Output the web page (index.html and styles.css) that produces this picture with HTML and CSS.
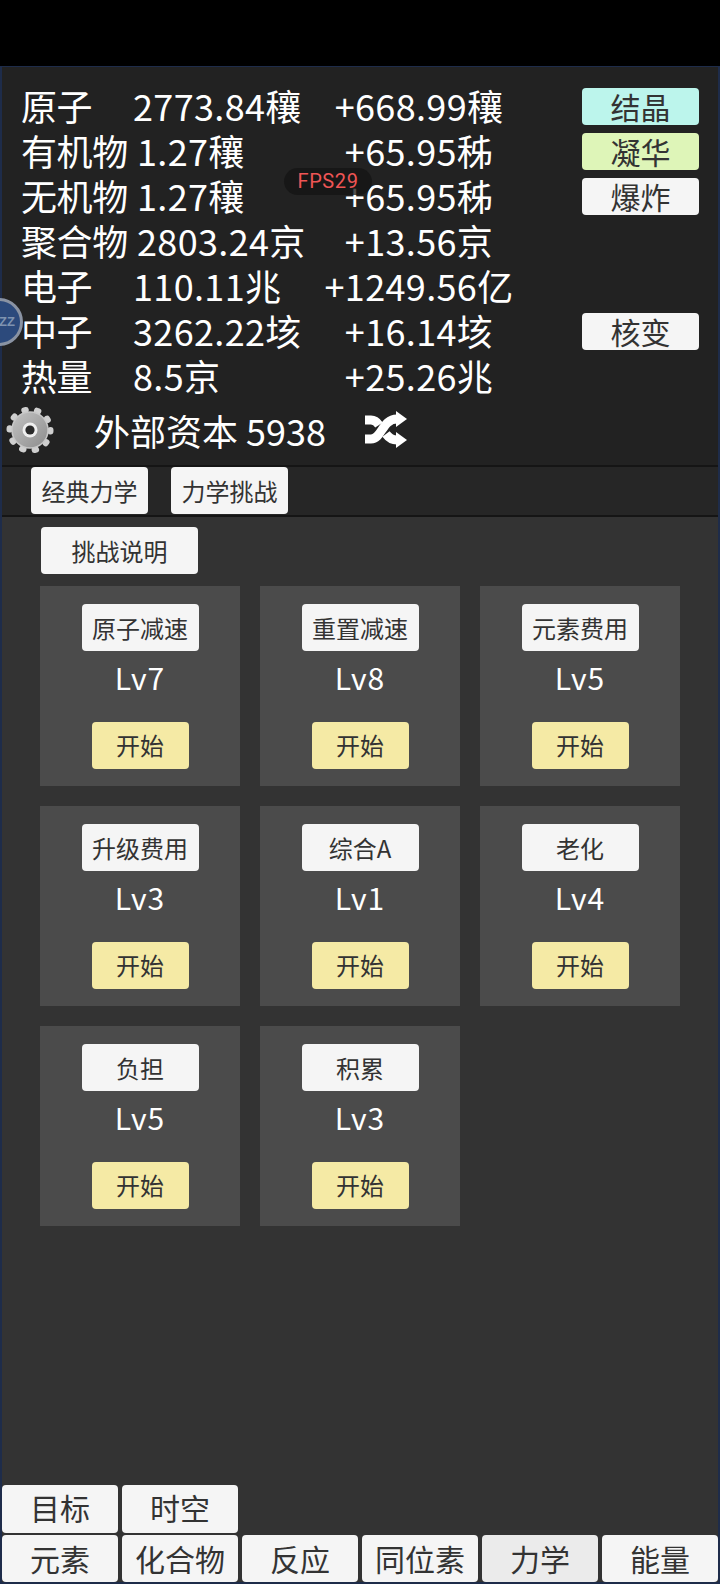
FILE: index.html
```html
<!DOCTYPE html>
<html lang="zh">
  <head>
    <meta charset="UTF-8" />
    <title>力学挑战</title>
    <link rel="stylesheet" href="styles.css">
  </head>
  <body>
    <div class="page">
      <div class="frame">
        <div class="stats">
          <div class="row"><span class="label">原子</span><span class="num">2773.84穰</span><span class="num delta">+668.99穰</span><button class="side crystal">结晶</button></div>
          <div class="row long"><span class="label">有机物</span><span class="num">1.27穰</span><span class="num delta">+65.95秭</span><button class="side sublime">凝华</button></div>
          <div class="row long"><span class="label">无机物</span><span class="num">1.27穰</span><span class="num delta">+65.95秭</span><button class="side">爆炸</button></div>
          <div class="row long"><span class="label">聚合物</span><span class="num">2803.24京</span><span class="num delta">+13.56京</span></div>
          <div class="row"><span class="label">电子</span><span class="num">110.11兆</span><span class="num delta">+1249.56亿</span></div>
          <div class="row"><span class="label">中子</span><span class="num">3262.22垓</span><span class="num delta">+16.14垓</span><button class="side">核变</button></div>
          <div class="row"><span class="label">热量</span><span class="num">8.5京</span><span class="num delta">+25.26兆</span></div>

          <div class="capital">
            <svg class="gear" viewBox="0 0 50 50" width="50" height="50">
              <defs>
                <linearGradient id="gearFill" x1="0" y1="0" x2="1" y2="1">
                  <stop offset="0" stop-color="#c4c4c4" />
                  <stop offset="1" stop-color="#8c8c8c" />
                </linearGradient>
              </defs>
              <circle cx="25" cy="25" r="20.5" fill="none" stroke="#cfcfcf" stroke-width="6" stroke-linecap="round" stroke-dasharray="1.5 11.38" />
              <circle cx="25" cy="25" r="18" fill="url(#gearFill)" stroke="#c8c8c8" stroke-width="1.5" />
              <circle cx="25" cy="25" r="7.5" fill="#efefef" />
              <circle cx="25" cy="25" r="4.6" fill="#2a2a2a" />
            </svg>
            <span class="capital-text">外部资本 5938</span>
            <svg class="shuffle" viewBox="0 0 42 40" width="42" height="40">
              <path d="M0 29H6C17 29 17 9 32 9" fill="none" stroke="#fff" stroke-width="9" />
              <path d="M0 10H6C10 10 12 12 14 15M21 24C24 28 27 30 32 30" fill="none" stroke="#fff" stroke-width="9" />
              <path d="M31 1L42 9L31 17Z" fill="#fff" />
              <path d="M31 22L42 30L31 38Z" fill="#fff" />
            </svg>
          </div>
        </div>

        <div class="tabs">
          <button class="btn tab">经典力学</button>
          <button class="btn tab">力学挑战</button>
        </div>

        <div class="content">
          <button class="btn help">挑战说明</button>
          <div class="cards">
            <div class="card"><button class="btn name">原子减速</button><div class="level">Lv7</div><button class="btn start">开始</button></div>
            <div class="card"><button class="btn name">重置减速</button><div class="level">Lv8</div><button class="btn start">开始</button></div>
            <div class="card"><button class="btn name">元素费用</button><div class="level">Lv5</div><button class="btn start">开始</button></div>
            <div class="card"><button class="btn name">升级费用</button><div class="level">Lv3</div><button class="btn start">开始</button></div>
            <div class="card"><button class="btn name">综合A</button><div class="level">Lv1</div><button class="btn start">开始</button></div>
            <div class="card"><button class="btn name">老化</button><div class="level">Lv4</div><button class="btn start">开始</button></div>
            <div class="card"><button class="btn name">负担</button><div class="level">Lv5</div><button class="btn start">开始</button></div>
            <div class="card"><button class="btn name">积累</button><div class="level">Lv3</div><button class="btn start">开始</button></div>
          </div>

          <div class="nav">
            <div class="nav-row">
              <button class="btn nav-btn">目标</button>
              <button class="btn nav-btn">时空</button>
            </div>
            <div class="nav-row">
              <button class="btn nav-btn">元素</button>
              <button class="btn nav-btn">化合物</button>
              <button class="btn nav-btn">反应</button>
              <button class="btn nav-btn">同位素</button>
              <button class="btn nav-btn active">力学</button>
              <button class="btn nav-btn">能量</button>
            </div>
          </div>
        </div>
      </div>

      <!-- floating overlays -->
      <div class="fps">FPS29</div>
      <div class="bubble">ZZ</div>
    </div>
  </body>
</html>
```

FILE: styles.css
```css
* {
  box-sizing: border-box;
}
body {
  margin: 0;
  background: #000;
  font-family: "Noto Sans CJK SC", "Noto Sans", sans-serif;
}
button {
  font-family: inherit;
  border: none;
  padding: 0;
  cursor: pointer;
}
.page {
  position: relative;
  width: 720px;
  height: 1584px;
  padding-top: 66px;
  overflow: hidden;
  display: flex;
  flex-direction: column;
}
.frame {
  flex: 1;
  min-height: 0;
  display: flex;
  flex-direction: column;
  background: #1e2c4a;
  padding: 1px 2px 2px 2px;
}
.stats {
  height: 400px;
  padding: 17px 0 0 19px;
  background: #222;
  color: #fff;
  font-size: 36px;
  border-bottom: 2px solid #151515;
}
.row {
  display: grid;
  grid-template-columns: 112px 166px 240px 160px;
  height: 45px;
  line-height: 42px;
  white-space: nowrap;
}
.row.long {
  grid-template-columns: 116px 162px 240px 160px;
}
.label {
  letter-spacing: -0.4px;
}
.num {
  letter-spacing: 0.35px;
}
.delta {
  text-align: center;
}
.side {
  justify-self: end;
  align-self: center;
  width: 117px;
  height: 37px;
  border-radius: 4px;
  background: #f5f5f5;
  color: #333;
  font-size: 30px;
  line-height: 37px;
}
.crystal {
  background: #bcf5ec;
}
.sublime {
  background: #def5b8;
}
.capital {
  display: flex;
  align-items: center;
  height: 56px;
  margin: 3px 0 0 -16px;
}
.capital-text {
  margin-left: 39px;
}
.shuffle {
  margin-left: 39px;
}
.tabs {
  display: flex;
  gap: 23px;
  height: 50px;
  padding-left: 29px;
  background: #262626;
  border-bottom: 2px solid #151515;
}
.btn {
  height: 47px;
  border-radius: 4px;
  background: #f5f5f5;
  color: #333;
  font-size: 24px;
  white-space: nowrap;
}
.tab {
  width: 117px;
}
.content {
  flex: 1;
  min-height: 0;
  display: flex;
  flex-direction: column;
  background: #333;
  padding-top: 10px;
}
.help {
  width: 157px;
  margin-left: 39px;
  flex: none;
}
.cards {
  display: grid;
  grid-template-columns: repeat(3, 200px);
  grid-auto-rows: 200px;
  gap: 20px;
  margin: 12px 0 0 38px;
}
.card {
  display: flex;
  flex-direction: column;
  align-items: center;
  padding-top: 18px;
  background: #4b4b4b;
}
.name {
  width: 117px;
}
.level {
  height: 56px;
  margin-bottom: 15px;
  color: #fff;
  font-size: 30px;
  letter-spacing: 1px;
  line-height: 52px;
}
.start {
  width: 97px;
  padding-bottom: 2px;
  background: #f5eaa5;
}
.nav {
  margin-top: auto;
  display: flex;
  flex-direction: column;
  gap: 2px;
}
.nav-row {
  display: flex;
  gap: 4px;
}
.nav-btn {
  width: 116px;
  padding-bottom: 2px;
  font-size: 30px;
}
.nav-row:first-child .nav-btn {
  height: 48px;
  padding-bottom: 4px;
}
.active {
  background: #ebebeb;
}
.fps {
  position: absolute;
  left: 284px;
  top: 168px;
  width: 88px;
  height: 27px;
  border-radius: 14px;
  background: rgba(20, 20, 20, 0.75);
  color: #ee5555;
  font-family: Roboto, sans-serif;
  font-size: 20px;
  letter-spacing: 0.6px;
  line-height: 27px;
  text-align: center;
}
.bubble {
  position: absolute;
  left: -25px;
  top: 298px;
  width: 48px;
  height: 48px;
  padding-left: 21px;
  border: 3px solid #8a93a3;
  border-radius: 50%;
  background: #2c4a7c;
  color: #7f93b0;
  font-family: "Liberation Sans", sans-serif;
  font-size: 13px;
  font-weight: bold;
  line-height: 42px;
}
```
